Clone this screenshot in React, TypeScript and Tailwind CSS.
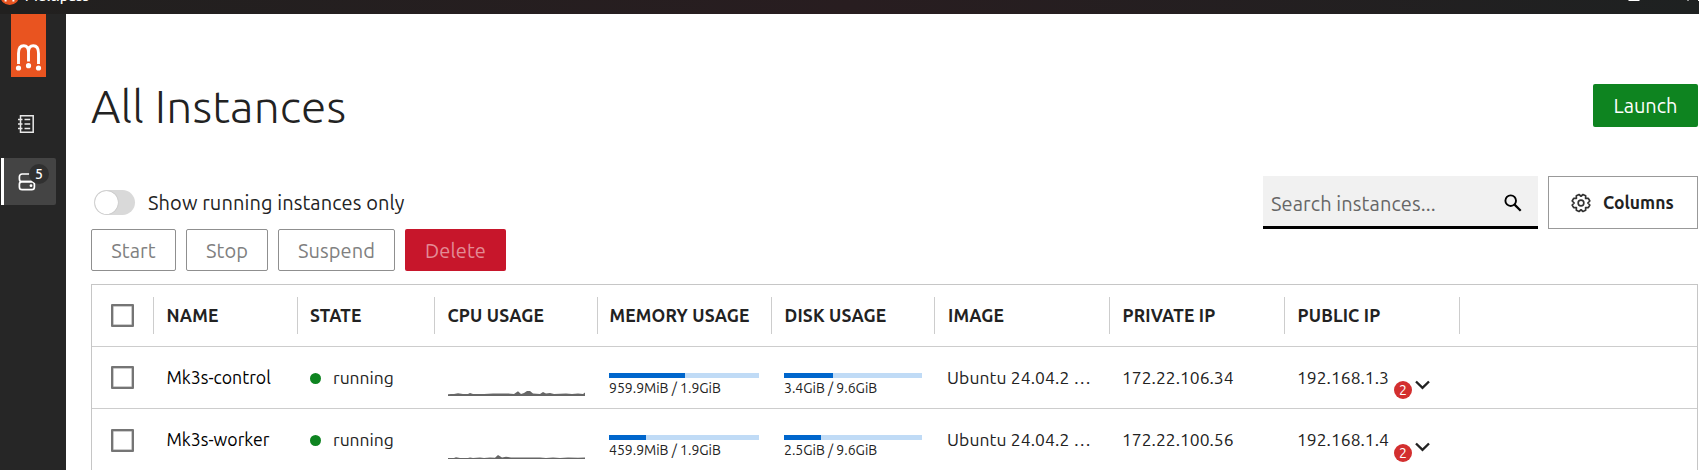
import type { ReactNode } from "react";

type Instance = {
  name: string;
  memory: string;
  memoryBar: number;
  disk: string;
  diskBar: number;
  privateIp: string;
  publicIp: string;
  spark: string;
};

const instances: Instance[] = [
  {
    name: "Mk3s-control",
    memory: "959.9MiB / 1.9GiB",
    memoryBar: 76,
    disk: "3.4GiB / 9.6GiB",
    diskBar: 49,
    privateIp: "172.22.106.34",
    publicIp: "192.168.1.3",
    spark:
      "M0 6V4.3L3 4L6 4L10 3.2L15 4L20 4L22 3L25 4L36 4L45 3.4L60 3.4L66 4L70 1.2L73 4L76 3L79 1L82 1L85 3.4L92 4L95 2L98 3.6L102 3L106 4L118 3.6L124 4L130 3.4L135 4L137 2.6V6Z",
  },
  {
    name: "Mk3s-worker",
    memory: "459.9MiB / 1.9GiB",
    memoryBar: 37,
    disk: "2.5GiB / 9.6GiB",
    diskBar: 37,
    privateIp: "172.22.100.56",
    publicIp: "192.168.1.4",
    spark:
      "M0 6V5L6 4.9L8 4.3L12 5L20 4.9L22 4.4L25 5L32 4.4L36 5L42 4.4L47 4.8L50 2L54 4.6L58 3.8L63 4.5L75 4.4L92 4.5L98 5L105 4.5L112 5L120 4.4L130 4.8L137 4.5V6Z",
  },
];

const HEADERS: { label: string; cell: string }[] = [
  { label: "NAME", cell: "w-[144px] pl-[12.500px]" },
  { label: "STATE", cell: "w-[137px] pl-[12px]" },
  { label: "CPU USAGE", cell: "w-[163px] pl-[12.500px]" },
  { label: "MEMORY USAGE", cell: "w-[174px] pl-[11.500px]" },
  { label: "DISK USAGE", cell: "w-[163px] pl-[12.500px]" },
  { label: "IMAGE", cell: "w-[175px] pl-[13px]" },
  { label: "PRIVATE IP", cell: "w-[175px] pl-[12.500px]" },
  { label: "PUBLIC IP", cell: "w-[175px] pl-[12.500px]" },
];

function Checkbox() {
  return (
    <div className="flex w-[61px] shrink-0 pl-[19px]">
      <div className="size-[23px] rounded-[1px] border-2 border-[#757575] bg-white shadow-[inset_0_0_0_0.5px_#999]" />
    </div>
  );
}

function UsageBar({ fill, label, width }: { fill: number; label: string; width: string }) {
  return (
    <div className={width}>
      <div className="h-[5px] bg-[#c0dbf6]">
        <div className="h-full bg-[#0066cc]" style={{ width: fill }} />
      </div>
      <div className="mt-[2px] whitespace-nowrap text-[14px] leading-[17px]">{label}</div>
    </div>
  );
}

function OutlineButton({ width, children }: { width: string; children: ReactNode }) {
  return (
    <button
      className={`${width} flex h-[42px] items-center justify-center rounded-[2px] border border-[#8f8f8f] pt-[2px] text-[20px] tracking-[0.1px] text-[#808080]`}
    >
      {children}
    </button>
  );
}

function Gear() {
  return (
    <svg className="mt-px size-[20px]" viewBox="0 0 24 24" fill="none" stroke="#333" strokeWidth="2" strokeLinejoin="round">
      <path d="M9.6 1.8 L12 3.9 L14.4 1.8 L17.6 3.2 L17.5 6.5 L20.8 6.4 L22.6 9.6 L20.2 12 L22.6 14.4 L20.8 17.6 L17.5 17.5 L17.6 20.8 L14.4 22.2 L12 20.1 L9.6 22.2 L6.4 20.8 L6.5 17.5 L3.2 17.6 L1.4 14.4 L3.8 12 L1.4 9.6 L3.2 6.4 L6.5 6.5 L6.4 3.2 Z" />
      <circle cx="12" cy="12" r="3.400" />
    </svg>
  );
}

function TitleBar() {
  return (
    <header className="relative h-[14px] shrink-0 overflow-hidden bg-gradient-to-r from-[#21201f] via-[#281d20] to-[#1e2121]">
      <svg className="absolute top-0 left-0" width="20" height="6" viewBox="0 0 20 6">
        <circle cx="9.7" cy="-4.500" r="9.500" fill="#e95420" />
        <path d="M5.6 0v1.6M13.4 0v1.6" stroke="#fff" strokeWidth="2" />
      </svg>
      <span className="absolute -top-[13px] left-[25px] text-[14.500px] leading-[18px] font-medium text-white">
        Multipass
      </span>
      <svg className="absolute top-0 right-0" width="72" height="2" viewBox="0 0 72 2">
        <path d="M1.5 0h11v1h-11zM60.500 0h1v1h-1zM71 0h1v1h-1z" fill="#fff" />
      </svg>
    </header>
  );
}

function Sidebar() {
  return (
    <nav className="flex w-[66px] shrink-0 flex-col bg-[#262626]">
      <div className="ml-[11px] flex h-[63px] w-[35px] items-end justify-center bg-[#e95420]">
        <svg width="35" height="40" viewBox="0 0 35 40" fill="none">
          <path
            d="M7.500 27V16.500C7.500 11 10 8.800 12.700 8.800C15.600 8.800 17.500 11 17.500 15V24.500M17.500 15C17.500 11 19.400 8.800 22.300 8.800C25 8.800 27.500 11 27.500 16.500V27"
            stroke="#fff"
            strokeWidth="2.900"
          />
          <circle cx="7.500" cy="31" r="2.600" fill="#fff" />
          <circle cx="17.500" cy="28.700" r="2.600" fill="#fff" />
          <circle cx="27.500" cy="31" r="2.600" fill="#fff" />
        </svg>
      </div>
      <svg className="mt-[37px] ml-[17px]" width="18" height="20" viewBox="0 0 18 20" fill="none" stroke="#e8e8e8">
        <path d="M3.500 1.800H16.200V18.200H3.500Z" strokeWidth="1.500" />
        <path d="M1 5.500H5.500M1 10H5.500M1 14.500H5.500M7.500 5.500H13.200M7.500 10H13.200M7.500 14.500H13.200" strokeWidth="1.500" />
      </svg>
      <div className="relative mt-[24px] ml-px flex h-[47px] w-[55px] items-center rounded-r-[2px] border-l-[3px] border-white bg-[#444444]">
        <svg className="ml-[13px]" width="20" height="20" viewBox="0 0 20 20" fill="none" stroke="#fff" strokeWidth="1.700">
          <rect x="2.400" y="2" width="15" height="7.700" rx="2.700" />
          <rect x="2.400" y="9.700" width="15" height="8" rx="2.700" />
          <circle cx="14" cy="13.700" r="1.400" fill="#fff" stroke="none" />
        </svg>
        <span className="absolute top-[6px] left-[25px] flex size-[20px] items-center justify-center rounded-full bg-[#303030] text-[14px] leading-none font-medium text-white">
          5
        </span>
      </div>
    </nav>
  );
}

function Row({ item }: { item: Instance }) {
  return (
    <div className="flex h-[62px] shrink-0 items-center text-[17.500px] text-[#222]">
      <Checkbox />
      <div className="w-[144px] shrink-0 pt-px pl-[13.500px] text-[17.700px] text-black">{item.name}</div>
      <div className="flex w-[137px] shrink-0 items-center gap-[12px] pt-px pl-[13px]">
        <span className="size-[11px] rounded-full bg-[#0e8420]" />
        <span>running</span>
      </div>
      <div className="w-[163px] shrink-0 pt-[31px] pl-[13.500px]">
        <svg className="block" width="137" height="6" viewBox="0 0 137 6">
          <path d={item.spark} fill="#666" />
        </svg>
      </div>
      <div className="w-[174px] shrink-0 pt-[14px] pl-[12px]">
        <UsageBar fill={item.memoryBar} label={item.memory} width="w-[150px]" />
      </div>
      <div className="w-[163px] shrink-0 pt-[14px] pl-[13px]">
        <UsageBar fill={item.diskBar} label={item.disk} width="w-[138px]" />
      </div>
      <div className="w-[175px] shrink-0 pt-px pl-[13px] tracking-[0.100px] whitespace-nowrap">Ubuntu 24.04.2 …</div>
      <div className="w-[175px] shrink-0 pt-px pl-[13px]">{item.privateIp}</div>
      <div className="flex w-[175px] shrink-0 items-center pl-[13px]">
        <span className="w-[97px] pt-px">{item.publicIp}</span>
        <span className="mt-[25px] flex size-[18px] items-center justify-center rounded-full bg-[#d32f2f] text-[14px] leading-none text-white">
          2
        </span>
        <svg className="mt-[14px] ml-[2px]" width="17" height="10" viewBox="0 0 17 10" fill="none">
          <path d="M2 1.500L8.500 7.800L15 1.500" stroke="#222" strokeWidth="2.400" />
        </svg>
      </div>
    </div>
  );
}

export default function App() {
  return (
    <div className="flex h-[470px] w-[1699px] flex-col overflow-hidden bg-white font-['Ubuntu','Noto_Sans',sans-serif] text-[#222]">
      <TitleBar />
      <div className="flex min-h-0 flex-1">
        <Sidebar />
        <main className="flex min-w-0 flex-1 flex-col pr-px pl-[25px]">
          <div className="mt-[70px] flex h-[43px] items-center justify-between">
            <h1 className="text-[46px] leading-[46px] font-light tracking-[0.180px] text-[#222]">All Instances</h1>
            <button className="flex h-[43px] w-[105px] items-center justify-center rounded-[2px] bg-[#0e8420] text-[20px] text-white">
              Launch
            </button>
          </div>

          <div className="mt-[49px] flex h-[53px] items-start justify-between">
            <label className="mt-[14px] flex h-[25px] items-center">
              <span className="ml-[3px] flex h-[25px] w-[41px] items-center rounded-full bg-[#d9d9d9] px-px">
                <span className="size-[23px] rounded-full bg-white shadow-[0_0_1px_rgba(0,0,0,0.35)]" />
              </span>
              <span className="ml-[13px] text-[20px] tracking-[0.100px]">Show running instances only</span>
            </label>
            <div className="flex gap-[10px]">
              <div className="flex h-[53px] w-[275px] items-center justify-between border-b-[3px] border-black bg-[#f1f1f1] pr-[15px] pl-[8px]">
                <span className="pt-[5px] text-[20px] tracking-[0.100px] text-[#666]">Search instances...</span>
                <svg className="mt-[3px]" width="20" height="20" viewBox="0 0 20 20" fill="none" stroke="#000">
                  <circle cx="7.700" cy="7.700" r="5.300" strokeWidth="1.900" />
                  <path d="M11.600 11.600L17.700 17.700" strokeWidth="2.200" />
                </svg>
              </div>
              <button className="flex h-[53px] w-[150px] items-center border border-[#999] pl-[22px] text-[17.500px] font-bold">
                <Gear />
                <span className="ml-[12px] pt-[2px]">Columns</span>
              </button>
            </div>
          </div>

          <div className="flex gap-[10px]">
            <OutlineButton width="w-[85px]">Start</OutlineButton>
            <OutlineButton width="w-[82px]">Stop</OutlineButton>
            <OutlineButton width="w-[117px]">Suspend</OutlineButton>
            <button className="flex h-[42px] w-[101px] items-center justify-center rounded-[2px] bg-[#c7162b] pt-[2px] text-[20px] tracking-[0.100px] text-[#e38b95]">
              Delete
            </button>
          </div>

          <section className="mt-[13px] flex h-[240px] shrink-0 flex-col divide-y divide-[#cdcdcd] border border-[#c6c6c6]">
            <div className="flex h-[62px] shrink-0 items-center">
              <Checkbox />
              {HEADERS.map((h) => (
                <div
                  key={h.label}
                  className={`${h.cell} flex h-[37px] shrink-0 items-center border-l border-[#cdcdcd] pt-px text-[17.500px] font-semibold tracking-[0.150px]`}
                >
                  {h.label}
                </div>
              ))}
              <div className="h-[37px] w-px bg-[#cdcdcd]" />
            </div>
            {instances.map((item) => (
              <Row key={item.name} item={item} />
            ))}
          </section>
        </main>
      </div>
    </div>
  );
}
